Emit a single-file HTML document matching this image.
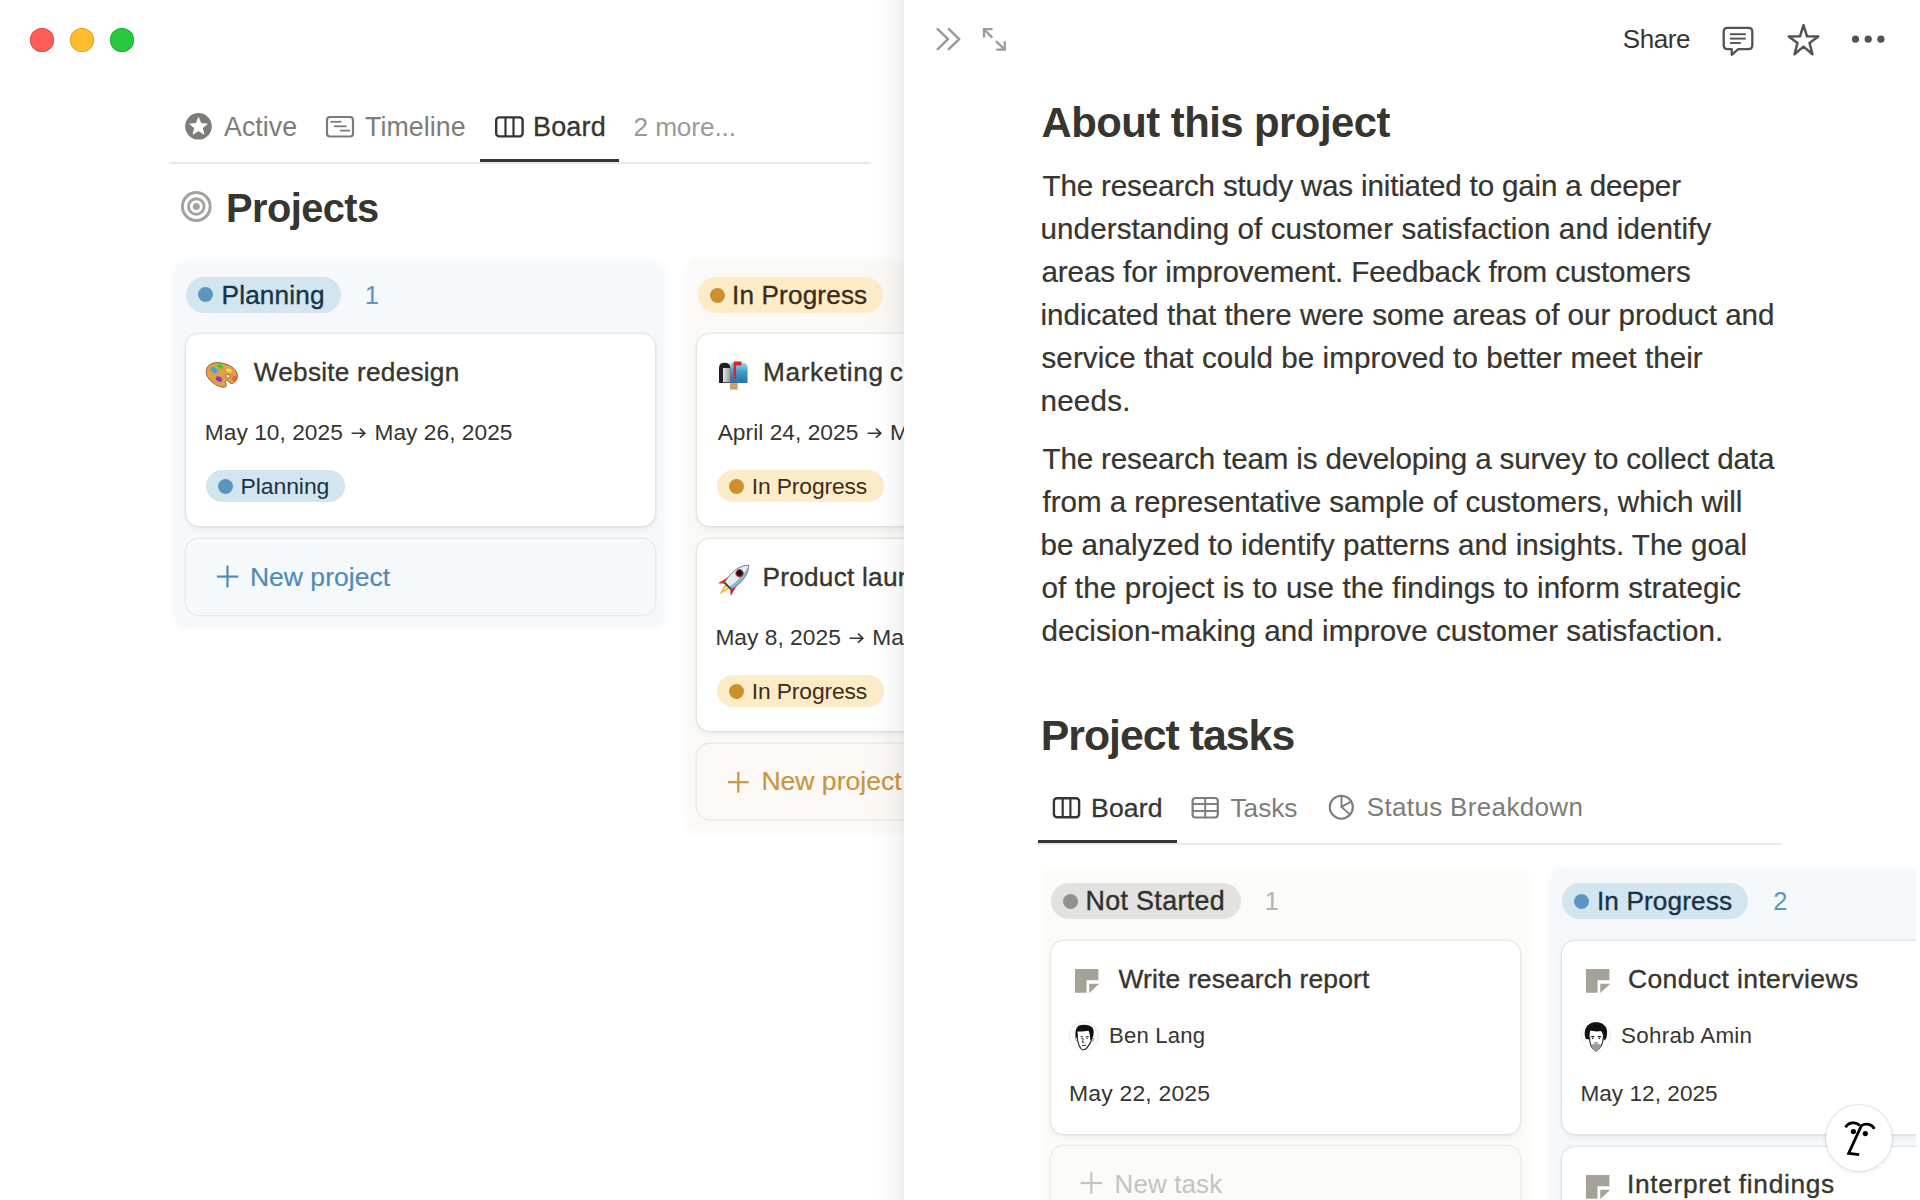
<!DOCTYPE html>
<html><head><meta charset="utf-8">
<style>
html,body{margin:0;padding:0;width:1920px;height:1200px;overflow:hidden;background:#fff;font-family:"Liberation Sans",sans-serif;}
.a{position:absolute;}
.t{position:absolute;line-height:160px;white-space:pre;}
.clip{position:absolute;left:0;top:0;height:1200px;overflow:hidden;}
svg{position:absolute;overflow:visible;}
.col{position:absolute;border-radius:12px;filter:blur(2px);}
.card{position:absolute;background:#fff;border-radius:13px;box-shadow:0 0 0 1.4px rgba(15,15,15,0.06),0 3px 6px rgba(15,15,15,0.06);}
.newb{position:absolute;border-radius:13px;box-shadow:0 0 0 1.5px rgba(15,15,15,0.06);}
.pill{position:absolute;border-radius:18px;}
.dot{position:absolute;border-radius:50%;}
</style></head><body>

<!-- ============ LEFT AREA ============ -->
<div class="clip" style="width:904px;">
  <!-- traffic lights -->
  <div class="dot" style="left:30px;top:28px;width:24px;height:24px;background:#ff5f57;box-shadow:inset 0 0 0 0.8px #e0443e;"></div>
  <div class="dot" style="left:70px;top:28px;width:24px;height:24px;background:#febc2e;box-shadow:inset 0 0 0 0.8px #dea123;"></div>
  <div class="dot" style="left:110px;top:28px;width:24px;height:24px;background:#28c840;box-shadow:inset 0 0 0 0.8px #1aab29;"></div>

  <!-- tab icons -->
  <svg style="left:0;top:0" width="1" height="1">
    <circle cx="198.5" cy="126.3" r="13.3" fill="#7d7c78"/>
    <path d="M198.5 117.6 L201 123.6 L207.3 124 L202.4 128 L204 134.2 L198.5 130.8 L193 134.2 L194.6 128 L189.7 124 L196 123.6 Z" fill="#fff" stroke="#fff" stroke-width="0.8" stroke-linejoin="round"/>
    <rect x="327" y="117" width="26" height="19.5" rx="3" fill="none" stroke="#7d7c78" stroke-width="2.2"/>
    <line x1="330.5" y1="121.8" x2="341.5" y2="121.8" stroke="#7d7c78" stroke-width="1.8"/>
    <line x1="334" y1="126.3" x2="346.5" y2="126.3" stroke="#7d7c78" stroke-width="1.8"/>
    <line x1="340" y1="130.6" x2="350" y2="130.6" stroke="#7d7c78" stroke-width="1.8"/>
    <rect x="496.2" y="117.4" width="26.4" height="19" rx="3" fill="none" stroke="#37352f" stroke-width="2.4"/>
    <line x1="505.5" y1="117.4" x2="505.5" y2="136.4" stroke="#37352f" stroke-width="2.2"/>
    <line x1="513.5" y1="117.4" x2="513.5" y2="136.4" stroke="#37352f" stroke-width="2.2"/>
    <!-- target icon -->
    <circle cx="196.3" cy="206.5" r="13.9" fill="none" stroke="#a3a3a0" stroke-width="3"/>
    <circle cx="196.3" cy="206.5" r="7.8" fill="none" stroke="#a3a3a0" stroke-width="2.9"/>
    <circle cx="196.3" cy="206.5" r="3.5" fill="#a3a3a0"/>
  </svg>
  <div class="a" style="left:169px;top:162px;width:702px;height:1.5px;background:#e9e9e8;"></div>
  <div class="a" style="left:480px;top:159px;width:139px;height:3px;background:#37352f;"></div>

  <!-- Planning column -->
  <div class="col" style="left:173px;top:261px;width:492px;height:368px;background:#f5f9fc;"></div>
  <div class="pill" style="left:186px;top:277px;width:155px;height:35.5px;background:#d3e5ef;"></div>
  <div class="dot" style="left:198px;top:287px;width:15px;height:15px;background:#5b97bd;"></div>
  <div class="card" style="left:185.5px;top:334px;width:469px;height:192px;"></div>
  <div class="pill" style="left:206px;top:470px;width:139px;height:32px;background:#d3e5ef;"></div>
  <div class="dot" style="left:218px;top:478.5px;width:15px;height:15px;background:#5b97bd;"></div>
  <div class="newb" style="left:185.5px;top:539px;width:469px;height:76px;"></div>
  <svg style="left:0;top:0" width="1" height="1">
    <line x1="216.9" y1="576.6" x2="238.1" y2="576.6" stroke="#4f8bb5" stroke-width="2.2"/>
    <line x1="227.5" y1="565.6" x2="227.5" y2="587.5" stroke="#4f8bb5" stroke-width="2.2"/>
  </svg>
  <svg style="left:206px;top:362px" width="32" height="26" viewBox="0 0 32 26">
    <path d="M3.5 2.8 C8 -0.6 17 0.2 23.5 3.6 C29.5 6.8 32.6 11.6 31 16.6 C30 19.8 27.3 22 24.8 21.4 C22.8 20.9 22.6 18.6 21 18.2 C19.4 17.8 18.9 19.8 20 22 C21 24.2 19.6 25.6 16.8 25.2 C10.5 24.2 3.4 19.6 1 13.6 C-0.6 9.6 0.4 5.2 3.5 2.8 Z" fill="#dfa14b" stroke="#8a5a22" stroke-width="0.9"/>
    <ellipse cx="8" cy="8" rx="3.6" ry="2.6" transform="rotate(35 8 8)" fill="#3fa7e0"/>
    <ellipse cx="14.2" cy="4.4" rx="2.9" ry="2.1" transform="rotate(25 14.2 4.4)" fill="#2fcf3a"/>
    <ellipse cx="23" cy="8.4" rx="3" ry="1.9" transform="rotate(25 23 8.4)" fill="#f7d93a"/>
    <ellipse cx="13" cy="17.2" rx="3.4" ry="2.4" transform="rotate(30 13 17.2)" fill="#9a33c8"/>
    <ellipse cx="28.6" cy="16.4" rx="2.3" ry="2.6" transform="rotate(25 28.6 16.4)" fill="#e8633a"/>
    <ellipse cx="22" cy="14.2" rx="2.4" ry="1.7" transform="rotate(25 22 14.2)" fill="#fff" stroke="#7a4a1a" stroke-width="0.7"/>
  </svg>

  <!-- In Progress column (left) -->
  <div class="col" style="left:685px;top:259px;width:400px;height:574px;background:#fbf9f5;"></div>
  <div class="pill" style="left:697.5px;top:277px;width:185px;height:35.5px;background:#fdecc8;"></div>
  <div class="dot" style="left:709.5px;top:287.5px;width:15px;height:15px;background:#cb912f;"></div>
  <div class="card" style="left:697px;top:334px;width:400px;height:192px;"></div>
  <div class="pill" style="left:717.4px;top:470.3px;width:167px;height:32px;background:#fdecc8;"></div>
  <div class="dot" style="left:729px;top:478.7px;width:15px;height:15px;background:#cb912f;"></div>
  <div class="card" style="left:697px;top:539px;width:400px;height:192px;"></div>
  <div class="pill" style="left:717.4px;top:675.2px;width:167px;height:32px;background:#fdecc8;"></div>
  <div class="dot" style="left:729px;top:683.6px;width:15px;height:15px;background:#cb912f;"></div>
  <div class="newb" style="left:697px;top:743.5px;width:400px;height:75.5px;"></div>
  <svg style="left:0;top:0" width="1" height="1">
    <line x1="728" y1="782.2" x2="748.6" y2="782.2" stroke="#c9953e" stroke-width="2.2"/>
    <line x1="738.3" y1="771.8" x2="738.3" y2="792.6" stroke="#c9953e" stroke-width="2.2"/>
  </svg>
  <svg style="left:718px;top:360px" width="32" height="32" viewBox="0 0 32 32">
    <defs><linearGradient id="mbg" x1="0" y1="0" x2="0" y2="1"><stop offset="0" stop-color="#8fdcf0"/><stop offset="0.5" stop-color="#3b97c6"/><stop offset="1" stop-color="#2a6fa8"/></linearGradient>
    <linearGradient id="mbs" x1="0" y1="0" x2="1" y2="0"><stop offset="0" stop-color="#e6e6e6"/><stop offset="1" stop-color="#9a9a9a"/></linearGradient></defs>
    <path d="M12.4 2.7 H25 Q29.5 2.7 29.5 8 V23 H12.4 Z" fill="url(#mbg)"/>
    <path d="M1 8 Q1 2.7 6.7 2.7 Q12.4 2.7 12.4 8 V23 H1 Z" fill="#1d1f22"/>
    <rect x="5" y="8" width="7" height="14.3" fill="url(#mbs)"/>
    <rect x="12" y="23" width="7.7" height="6.6" fill="#c9a55d"/>
    <path d="M15.5 1.4 H23.5 V5.5 H18 V18.8 H15.5 Z" fill="#e2231c"/>
  </svg>
  <svg style="left:0;top:0" width="1" height="1">
   <g transform="translate(733.9 580) rotate(45)">
    <path d="M-3.6 7.5 L0 20.5 L3.6 7.5 Z" fill="#f5b82e"/>
    <path d="M-2 7.5 L0 15.5 L2 7.5 Z" fill="#fde27a"/>
    <path d="M-5.2 -1.5 L-9 13.5 L-3.8 9 Z" fill="#e5301d"/>
    <path d="M5.2 -1.5 L9 13.5 L3.8 9 Z" fill="#e01f1a"/>
    <path d="M0 -21 C5 -16 7 -8 6.3 0 C6 4 5.2 7 4.5 8.8 L-4.5 8.8 C-5.2 7 -6 4 -6.3 0 C-7 -8 -5 -16 0 -21 Z" fill="#e6ecf0" stroke="#566a80" stroke-width="0.8"/>
    <path d="M0.8 -20 C5 -15.5 7 -8 6.3 0 C6 4 5.2 7 4.5 8.8 L1.2 8.8 C3 2 3.5 -10 0.8 -20 Z" fill="#5d93c2" opacity="0.65"/>
    <circle cx="-0.8" cy="-8.8" r="3.5" fill="#161616" stroke="#b8342c" stroke-width="1"/>
    <rect x="-4.6" y="7.6" width="9.2" height="1.8" fill="#3a4756"/>
   </g>
  </svg>
<div class="t" style="left:732.00px;top:214.80px;font-family:'Liberation Sans';font-weight:400;font-size:26.17px;white-space:pre;-webkit-text-stroke:0.352px #402c1b;letter-spacing:0.145px;color:#402c1b">In Progress</div>
<div class="t" style="left:763.00px;top:292.00px;font-family:'Liberation Sans';font-weight:400;font-size:26.2px;white-space:pre;-webkit-text-stroke:0.353px #37352f;letter-spacing:0.636px;color:#37352f">Marketing</div>
<div class="t" style="left:889.80px;top:292.00px;font-family:'Liberation Sans';font-weight:400;font-size:26.2px;white-space:pre;-webkit-text-stroke:0.353px #37352f;letter-spacing:0.636px;color:#37352f">campaign</div>
<div class="t" style="left:717.70px;top:352.10px;font-family:'Liberation Sans';font-weight:400;font-size:22.73px;white-space:pre;letter-spacing:0.034px;color:#37352f">April 24, 2025 <span style="display:inline-block;position:relative;width:0.83em;height:0"><svg style="left:0.09em;top:-0.53em;width:0.66em;height:0.46em" viewBox="0 0 15 10.5"><path d="M0.6 5.25 H13.8 M9 0.7 L13.8 5.25 L9 9.8" fill="none" stroke="currentColor" stroke-width="1.7"/></svg></span> May 24, 2025</div>
<div class="t" style="left:751.70px;top:406.00px;font-family:'Liberation Sans';font-weight:400;font-size:22.86px;white-space:pre;letter-spacing:-0.127px;color:#402c1b">In Progress</div>
<div class="t" style="left:762.60px;top:497.20px;font-family:'Liberation Sans';font-weight:400;font-size:26.2px;white-space:pre;-webkit-text-stroke:0.353px #37352f;letter-spacing:0.238px;color:#37352f">Product launch</div>
<div class="t" style="left:715.40px;top:557.00px;font-family:'Liberation Sans';font-weight:400;font-size:22.73px;white-space:pre;letter-spacing:0.034px;color:#37352f">May 8, 2025 <span style="display:inline-block;position:relative;width:0.83em;height:0"><svg style="left:0.09em;top:-0.53em;width:0.66em;height:0.46em" viewBox="0 0 15 10.5"><path d="M0.6 5.25 H13.8 M9 0.7 L13.8 5.25 L9 9.8" fill="none" stroke="currentColor" stroke-width="1.7"/></svg></span> May 30, 2025</div>
<div class="t" style="left:751.70px;top:611.00px;font-family:'Liberation Sans';font-weight:400;font-size:22.86px;white-space:pre;letter-spacing:-0.127px;color:#402c1b">In Progress</div>
<div class="t" style="left:761.40px;top:701.40px;font-family:'Liberation Sans';font-weight:400;font-size:26.51px;white-space:pre;-webkit-text-stroke:0.204px #c9953e;letter-spacing:0.025px;color:#c9953e">New project</div>
</div>
<!-- shadow of panel -->
<div class="a" style="left:868px;top:0;width:36px;height:1200px;background:linear-gradient(to right,rgba(0,0,0,0),rgba(0,0,0,0.01) 50%,rgba(0,0,0,0.022) 56%,rgba(0,0,0,0.035) 85%,rgba(0,0,0,0.07));"></div>

<!-- ============ RIGHT PANEL ============ -->
<div class="a" style="left:904px;top:0;width:1016px;height:1200px;background:#fff;"></div>
<svg style="left:0;top:0" width="1" height="1">
  <!-- chevrons -->
  <polyline points="937.7,29.1 948,39.2 937.7,49.1" fill="none" stroke="#9b9a97" stroke-width="2.5" stroke-linecap="round" stroke-linejoin="round"/>
  <polyline points="948.9,29.1 959.2,39.2 948.9,49.1" fill="none" stroke="#9b9a97" stroke-width="2.5" stroke-linecap="round" stroke-linejoin="round"/>
  <!-- expand -->
  <polyline points="984,37.5 984,29.2 992.5,29.2" fill="none" stroke="#9b9a97" stroke-width="2.3"/>
  <line x1="984.5" y1="29.7" x2="992.3" y2="37.6" stroke="#9b9a97" stroke-width="2.3"/>
  <polyline points="996.3,49.6 1004.8,49.6 1004.8,41.2" fill="none" stroke="#9b9a97" stroke-width="2.3"/>
  <line x1="996" y1="41.1" x2="1004.3" y2="49.1" stroke="#9b9a97" stroke-width="2.3"/>
  <!-- comment -->
  <path d="M1727.5 27.8 H1748.5 Q1752.3 27.8 1752.3 31.6 V45.3 Q1752.3 49.1 1748.5 49.1 H1738.3 L1731.7 54.8 V49.1 H1727.5 Q1723.7 49.1 1723.7 45.3 V31.6 Q1723.7 27.8 1727.5 27.8 Z" fill="none" stroke="#55534e" stroke-width="2.3" stroke-linejoin="round"/>
  <line x1="1730" y1="34.2" x2="1745.8" y2="34.2" stroke="#55534e" stroke-width="1.9"/>
  <line x1="1730" y1="38.6" x2="1745.8" y2="38.6" stroke="#55534e" stroke-width="1.9"/>
  <line x1="1730" y1="43" x2="1740.8" y2="43" stroke="#55534e" stroke-width="1.9"/>
  <!-- star -->
  <path d="M1803.5 25.2 L1807 36.3 L1818.3 36.6 L1809.5 43 L1812.5 54.2 L1803.5 46.6 L1794.5 54.2 L1797.5 43 L1788.7 36.6 L1800 36.3 Z" fill="none" stroke="#55534e" stroke-width="2.5" stroke-linejoin="round"/>
  <!-- dots -->
  <circle cx="1855.5" cy="39.2" r="3.6" fill="#55534e"/>
  <circle cx="1868.2" cy="39.2" r="3.6" fill="#55534e"/>
  <circle cx="1880.9" cy="39.2" r="3.6" fill="#55534e"/>

  <!-- tabs 2 icons -->
  <rect x="1053.9" y="798.2" width="25.2" height="19" rx="3" fill="none" stroke="#37352f" stroke-width="2.4"/>
  <line x1="1062.7" y1="798.2" x2="1062.7" y2="817.2" stroke="#37352f" stroke-width="2.2"/>
  <line x1="1070.4" y1="798.2" x2="1070.4" y2="817.2" stroke="#37352f" stroke-width="2.2"/>
  <rect x="1192.6" y="798" width="25.2" height="19.5" rx="3" fill="none" stroke="#7d7c78" stroke-width="2.2"/>
  <line x1="1192.6" y1="804" x2="1217.8" y2="804" stroke="#7d7c78" stroke-width="1.9"/>
  <line x1="1192.6" y1="811" x2="1217.8" y2="811" stroke="#7d7c78" stroke-width="1.9"/>
  <line x1="1205.2" y1="798" x2="1205.2" y2="817.5" stroke="#7d7c78" stroke-width="1.9"/>
  <circle cx="1341.3" cy="807.2" r="11.5" fill="none" stroke="#7d7c78" stroke-width="2.1"/>
  <polyline points="1341.5,795.8 1341.5,806.9 1351,801.6" fill="none" stroke="#7d7c78" stroke-width="1.9"/>
  <line x1="1341.5" y1="806.9" x2="1350" y2="814.6" stroke="#7d7c78" stroke-width="1.9"/>
</svg>
<div class="a" style="left:1038px;top:843px;width:743.5px;height:1.8px;background:#e9e9e8;"></div>
<div class="a" style="left:1038px;top:840px;width:139px;height:3px;background:#37352f;"></div>

<div class="clip" style="width:1916px;">
  <!-- Not Started column -->
  <div class="col" style="left:1041px;top:868px;width:488px;height:400px;background:#fbfbf7;"></div>
  <div class="pill" style="left:1051.3px;top:883px;width:189.5px;height:35.7px;background:#e3e2e0;"></div>
  <div class="dot" style="left:1063px;top:893.8px;width:15px;height:15px;background:#91918e;"></div>
  <div class="card" style="left:1050.5px;top:941px;width:469.5px;height:193px;"></div>
  <div class="newb" style="left:1050.5px;top:1146px;width:469.5px;height:90px;"></div>
  <svg style="left:0;top:0" width="1" height="1">
    <line x1="1080.6" y1="1183" x2="1102" y2="1183" stroke="#c4c3bf" stroke-width="2.2"/>
    <line x1="1091.3" y1="1172.3" x2="1091.3" y2="1193.7" stroke="#c4c3bf" stroke-width="2.2"/>
  </svg>
  <!-- In Progress column right -->
  <div class="col" style="left:1548.5px;top:867px;width:500px;height:400px;background:#f5f9fc;"></div>
  <div class="pill" style="left:1562px;top:883.2px;width:185.7px;height:35.8px;background:#d3e5ef;"></div>
  <div class="dot" style="left:1573.5px;top:894px;width:15px;height:15px;background:#5b97bd;"></div>
  <div class="card" style="left:1561.5px;top:941px;width:480px;height:193px;"></div>
  <div class="card" style="left:1561.5px;top:1147px;width:480px;height:193px;"></div>
  <svg style="left:1074.75px;top:969.35px" width="25" height="25" viewBox="0 0 25 25"><path d="M0 0 H23.4 V11.25 H11.55 V23.7 H0 Z" fill="#a6a299"/><path d="M14.25 14.85 H24.25 L14.25 24 Z" fill="#a6a299"/></svg><svg style="left:1586.2px;top:969.35px" width="25" height="25" viewBox="0 0 25 25"><path d="M0 0 H23.4 V11.25 H11.55 V23.7 H0 Z" fill="#a6a299"/><path d="M14.25 14.85 H24.25 L14.25 24 Z" fill="#a6a299"/></svg><svg style="left:1586.2px;top:1174.8px" width="25" height="25" viewBox="0 0 25 25"><path d="M0 0 H23.4 V11.25 H11.55 V23.7 H0 Z" fill="#a6a299"/><path d="M14.25 14.85 H24.25 L14.25 24 Z" fill="#a6a299"/></svg>
  <svg style="left:1066.5px;top:1018.6px" width="34" height="34" viewBox="0 0 34 34">
    <circle cx="16.5" cy="17" r="14.5" fill="#fff" stroke="#ededec" stroke-width="1"/>
    <path d="M8.6 19 C8 12 9 7.5 13 6.3 C17 5 23 5.5 25.5 8.8 C27.2 11 27 16 25.2 20.5 L23.3 21 C23.3 17 22.5 13.4 21.5 11.7 C18 12.4 13.5 12.6 10.5 12.4 C10.3 14.5 10.3 17 10.4 19.5 Z" fill="#111"/>
    <path d="M10.2 14 C10 20 11 25.5 13.8 29.5 C15.2 31.3 17.6 31.2 19.8 29 C22.2 26.5 24 23 24.8 20" fill="none" stroke="#222" stroke-width="1.1"/>
    <path d="M9.5 18.5 C8 18.5 8 21.5 10.2 22.5" fill="none" stroke="#999" stroke-width="1"/>
    <path d="M25 19 C27 18 27.5 21.5 25 23" fill="none" stroke="#999" stroke-width="1"/>
    <path d="M13.5 17.6 H15.8 M18.7 17.6 H21.8" stroke="#333" stroke-width="0.9"/>
    <circle cx="15" cy="19.2" r="0.8" fill="#333"/><circle cx="20" cy="19.2" r="0.8" fill="#333"/>
    <path d="M16.3 19.5 L15.4 23.3 L17.3 23.6" fill="none" stroke="#222" stroke-width="0.9"/>
    <path d="M15 26.3 Q17 26.8 19 26.2" fill="none" stroke="#333" stroke-width="1"/>
  </svg><svg style="left:1580px;top:1018px" width="34" height="36" viewBox="0 0 34 36">
    <circle cx="16" cy="19" r="14.5" fill="#fff" stroke="#ededec" stroke-width="1"/>
    <path d="M5.8 21 C3.5 15 5 9 9 6.5 C11 4.5 14 4 16.5 4.2 C19.5 4 23 5.5 25 8 C27.5 11 27.3 15 26.8 18 C26.5 20 25.5 21.5 24.6 22.5 L23 20 C23.2 16.5 22.3 14 20.8 13 C17 13.8 13 13.2 10.4 12.6 C9.6 15 9.4 18 9.6 21.5 Z" fill="#111"/>
    <path d="M9.6 19 C9.4 25 11.5 30.5 16 33 C20.5 30.5 23 26 23.3 19.5" fill="none" stroke="#222" stroke-width="1.1"/>
    <path d="M11.3 27 C12.3 31 14 33 16 33 C18 33 20 31 21.2 27 C18.6 25.4 14 25.4 11.3 27 Z" fill="#9c9c9c"/>
    <path d="M11.2 18.6 H14.3 M17.8 18.6 H21" stroke="#222" stroke-width="1.1"/>
    <circle cx="12.8" cy="20.4" r="0.8" fill="#333"/><circle cx="19.2" cy="20.4" r="0.8" fill="#333"/>
    <path d="M14.2 25 Q16 24.4 18 25" fill="none" stroke="#444" stroke-width="0.8"/>
  </svg>
<div class="t" style="left:1596.90px;top:821.00px;font-family:'Liberation Sans';font-weight:400;font-size:26.17px;white-space:pre;-webkit-text-stroke:0.352px #183347;letter-spacing:0.145px;color:#183347">In Progress</div>
<div class="t" style="left:1628.00px;top:899.00px;font-family:'Liberation Sans';font-weight:400;font-size:26.49px;white-space:pre;-webkit-text-stroke:0.357px #37352f;letter-spacing:0.377px;color:#37352f">Conduct interviews</div>
<div class="t" style="left:1627.00px;top:1104.00px;font-family:'Liberation Sans';font-weight:400;font-size:26.27px;white-space:pre;-webkit-text-stroke:0.354px #37352f;letter-spacing:0.675px;color:#37352f">Interpret findings</div>
</div>

<div class="t" style="left:224.00px;top:46.80px;font-family:'Liberation Sans';font-weight:400;font-size:26.73px;white-space:pre;letter-spacing:0.073px;color:#7d7c78">Active</div>
<div class="t" style="left:365.00px;top:46.80px;font-family:'Liberation Sans';font-weight:400;font-size:26.75px;white-space:pre;letter-spacing:0.08px;color:#7d7c78">Timeline</div>
<div class="t" style="left:533.00px;top:47.20px;font-family:'Liberation Sans';font-weight:400;font-size:26.94px;white-space:pre;-webkit-text-stroke:0.311px #37352f;letter-spacing:0.21px;color:#37352f">Board</div>
<div class="t" style="left:633.50px;top:47.20px;font-family:'Liberation Sans';font-weight:400;font-size:26.29px;white-space:pre;letter-spacing:-0.146px;color:#9b9a97">2 more...</div>
<div class="t" style="left:226.00px;top:127.80px;font-family:'Liberation Sans';font-weight:700;font-size:39.82px;white-space:pre;letter-spacing:-0.558px;color:#37352f">Projects</div>
<div class="t" style="left:221.50px;top:214.80px;font-family:'Liberation Sans';font-weight:400;font-size:26.19px;white-space:pre;-webkit-text-stroke:0.353px #183347;letter-spacing:0.175px;color:#183347">Planning</div>
<div class="t" style="left:364.80px;top:214.80px;font-family:'Liberation Sans';font-weight:400;font-size:25.5px;white-space:pre;letter-spacing:0px;color:#5b97bd">1</div>
<div class="t" style="left:253.80px;top:292.00px;font-family:'Liberation Sans';font-weight:400;font-size:26.2px;white-space:pre;-webkit-text-stroke:0.353px #37352f;letter-spacing:0.238px;color:#37352f">Website redesign</div>
<div class="t" style="left:204.80px;top:352.00px;font-family:'Liberation Sans';font-weight:400;font-size:22.73px;white-space:pre;letter-spacing:0.034px;color:#37352f">May 10, 2025 <span style="display:inline-block;position:relative;width:0.83em;height:0"><svg style="left:0.09em;top:-0.53em;width:0.66em;height:0.46em" viewBox="0 0 15 10.5"><path d="M0.6 5.25 H13.8 M9 0.7 L13.8 5.25 L9 9.8" fill="none" stroke="currentColor" stroke-width="1.7"/></svg></span> May 26, 2025</div>
<div class="t" style="left:240.60px;top:405.80px;font-family:'Liberation Sans';font-weight:400;font-size:22.96px;white-space:pre;letter-spacing:-0.086px;color:#183347">Planning</div>
<div class="t" style="left:249.90px;top:497.20px;font-family:'Liberation Sans';font-weight:400;font-size:26.51px;white-space:pre;-webkit-text-stroke:0.204px #4f8bb5;letter-spacing:0.025px;color:#4f8bb5">New project</div>
<div class="t" style="left:1622.80px;top:-40.70px;font-family:'Liberation Sans';font-weight:400;font-size:25.97px;white-space:pre;letter-spacing:-0.401px;color:#37352f">Share</div>
<div class="t" style="left:1041.50px;top:43.00px;font-family:'Liberation Sans';font-weight:700;font-size:41.83px;white-space:pre;letter-spacing:-0.528px;color:#37352f">About this project</div>
<div class="t" style="left:1042.50px;top:105.60px;font-family:'Liberation Sans';font-weight:400;font-size:29.59px;white-space:pre;-webkit-text-stroke:0.228px #37352f;letter-spacing:-0.16px;color:#37352f">The research study was initiated to gain a deeper</div>
<div class="t" style="left:1040.50px;top:148.60px;font-family:'Liberation Sans';font-weight:400;font-size:29.59px;white-space:pre;-webkit-text-stroke:0.228px #37352f;letter-spacing:0.096px;color:#37352f">understanding of customer satisfaction and identify</div>
<div class="t" style="left:1041.50px;top:191.60px;font-family:'Liberation Sans';font-weight:400;font-size:29.59px;white-space:pre;-webkit-text-stroke:0.228px #37352f;letter-spacing:-0.11px;color:#37352f">areas for improvement. Feedback from customers</div>
<div class="t" style="left:1040.50px;top:234.60px;font-family:'Liberation Sans';font-weight:400;font-size:29.59px;white-space:pre;-webkit-text-stroke:0.228px #37352f;letter-spacing:-0.018px;color:#37352f">indicated that there were some areas of our product and</div>
<div class="t" style="left:1041.50px;top:277.60px;font-family:'Liberation Sans';font-weight:400;font-size:29.59px;white-space:pre;-webkit-text-stroke:0.228px #37352f;letter-spacing:0.072px;color:#37352f">service that could be improved to better meet their</div>
<div class="t" style="left:1040.50px;top:320.60px;font-family:'Liberation Sans';font-weight:400;font-size:29.59px;white-space:pre;-webkit-text-stroke:0.228px #37352f;letter-spacing:0.235px;color:#37352f">needs.</div>
<div class="t" style="left:1042.50px;top:379.00px;font-family:'Liberation Sans';font-weight:400;font-size:29.59px;white-space:pre;-webkit-text-stroke:0.228px #37352f;letter-spacing:-0.145px;color:#37352f">The research team is developing a survey to collect data</div>
<div class="t" style="left:1042.50px;top:422.00px;font-family:'Liberation Sans';font-weight:400;font-size:29.59px;white-space:pre;-webkit-text-stroke:0.228px #37352f;letter-spacing:-0.038px;color:#37352f">from a representative sample of customers, which will</div>
<div class="t" style="left:1040.50px;top:465.00px;font-family:'Liberation Sans';font-weight:400;font-size:29.59px;white-space:pre;-webkit-text-stroke:0.228px #37352f;letter-spacing:-0.001px;color:#37352f">be analyzed to identify patterns and insights. The goal</div>
<div class="t" style="left:1041.50px;top:508.00px;font-family:'Liberation Sans';font-weight:400;font-size:29.59px;white-space:pre;-webkit-text-stroke:0.228px #37352f;letter-spacing:0.133px;color:#37352f">of the project is to use the findings to inform strategic</div>
<div class="t" style="left:1041.50px;top:551.00px;font-family:'Liberation Sans';font-weight:400;font-size:29.59px;white-space:pre;-webkit-text-stroke:0.228px #37352f;letter-spacing:0.056px;color:#37352f">decision-making and improve customer satisfaction.</div>
<div class="t" style="left:1040.75px;top:655.30px;font-family:'Liberation Sans';font-weight:700;font-size:42.81px;white-space:pre;letter-spacing:-1.0px;color:#37352f">Project tasks</div>
<div class="t" style="left:1091.00px;top:727.90px;font-family:'Liberation Sans';font-weight:400;font-size:26.59px;white-space:pre;-webkit-text-stroke:0.307px #37352f;letter-spacing:0.182px;color:#37352f">Board</div>
<div class="t" style="left:1230.50px;top:727.90px;font-family:'Liberation Sans';font-weight:400;font-size:26.25px;white-space:pre;letter-spacing:-0.031px;color:#7d7c78">Tasks</div>
<div class="t" style="left:1366.80px;top:727.40px;font-family:'Liberation Sans';font-weight:400;font-size:26.04px;white-space:pre;letter-spacing:0.325px;color:#7d7c78">Status Breakdown</div>
<div class="t" style="left:1085.50px;top:821.00px;font-family:'Liberation Sans';font-weight:400;font-size:26.85px;white-space:pre;-webkit-text-stroke:0.361px #32302c;letter-spacing:0.343px;color:#32302c">Not Started</div>
<div class="t" style="left:1264.70px;top:821.00px;font-family:'Liberation Sans';font-weight:400;font-size:25.5px;white-space:pre;letter-spacing:0px;color:#b4b3b0">1</div>
<div class="t" style="left:1118.40px;top:899.00px;font-family:'Liberation Sans';font-weight:400;font-size:26.47px;white-space:pre;-webkit-text-stroke:0.356px #37352f;letter-spacing:0.144px;color:#37352f">Write research report</div>
<div class="t" style="left:1109.00px;top:956.30px;font-family:'Liberation Sans';font-weight:400;font-size:22.13px;white-space:pre;letter-spacing:0.197px;color:#37352f">Ben Lang</div>
<div class="t" style="left:1069.00px;top:1013.20px;font-family:'Liberation Sans';font-weight:400;font-size:22.91px;white-space:pre;letter-spacing:0.201px;color:#37352f">May 22, 2025</div>
<div class="t" style="left:1114.60px;top:1103.70px;font-family:'Liberation Sans';font-weight:400;font-size:25.94px;white-space:pre;letter-spacing:0.123px;color:#c4c3bf">New task</div>
<div class="t" style="left:1773.30px;top:821.00px;font-family:'Liberation Sans';font-weight:400;font-size:25.5px;white-space:pre;letter-spacing:0px;color:#5b97bd">2</div>
<div class="t" style="left:1621.00px;top:956.30px;font-family:'Liberation Sans';font-weight:400;font-size:22.35px;white-space:pre;letter-spacing:0.312px;color:#37352f">Sohrab Amin</div>
<div class="t" style="left:1580.40px;top:1014.20px;font-family:'Liberation Sans';font-weight:400;font-size:22.59px;white-space:pre;letter-spacing:0.038px;color:#37352f">May 12, 2025</div>

<!-- AI button -->
<div class="dot" style="left:1825.5px;top:1104.8px;width:66px;height:66px;background:#fff;box-shadow:0 0 0 1px rgba(15,15,15,0.09),0 2px 6px rgba(15,15,15,0.07);"></div>
<svg style="left:0;top:0" width="1" height="1">
    <path d="M1845.6 1127.4 A8.2 7.4 0 0 1 1859.6 1125.6" fill="none" stroke="#000" stroke-width="2.8"/>
    <path d="M1874.3 1128.8 A8.6 8 0 0 0 1861.4 1125.6 L1848.6 1153.3 L1859.2 1154.6" fill="none" stroke="#000" stroke-width="2.8" stroke-linejoin="miter"/>
    <circle cx="1853.4" cy="1131.6" r="2.6" fill="#000"/>
    <circle cx="1865.3" cy="1133.6" r="2.6" fill="#000"/>
</svg>
</body></html>
